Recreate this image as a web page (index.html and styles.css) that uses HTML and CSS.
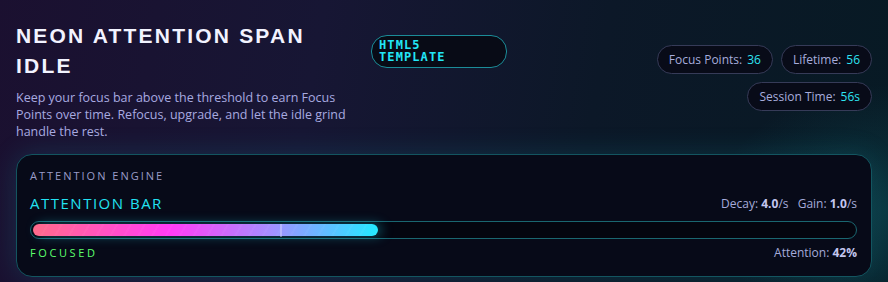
FILE: index.html
```html
<!DOCTYPE html>
<html lang="en">
<head>
<meta charset="utf-8">
<title>Neon Attention Span Idle</title>
<link rel="stylesheet" href="styles.css">
</head>
<body>
<div class="shell">
  <header class="header">
    <div class="intro">
      <h1 class="title">NEON ATTENTION SPAN IDLE</h1>
      <p class="desc">Keep your focus bar above the threshold to earn Focus Points over time. Refocus, upgrade, and let the idle grind handle the rest.</p>
    </div>
    <div class="badge"><span class="badge-text">HTML5 TEMPLATE</span></div>
    <div class="stats">
      <span class="pill">Focus Points: <b>36</b></span>
      <span class="pill">Lifetime: <b>56</b></span>
      <span class="pill">Session Time: <b>56s</b></span>
    </div>
  </header>
  <section class="card">
    <div class="eyebrow">ATTENTION ENGINE</div>
    <div class="row">
      <h2 class="bar-title">ATTENTION BAR</h2>
      <div class="rates">Decay: <b>4.0</b>/s <span class="sp"></span>Gain: <b>1.0</b>/s</div>
    </div>
    <div class="track">
      <div class="fill" style="width:42%"></div>
      <div class="marker" style="left:30%"></div>
    </div>
    <div class="row row-bottom">
      <div class="state">FOCUSED</div>
      <div class="rates">Attention: <b>42%</b></div>
    </div>
  </section>
</div>
</body>
</html>
```
FILE: styles.css
```css
html, body {
  margin: 0;
  padding: 0;
  background: #0b1322;
  overflow: hidden;
  height: 282px;
}
body {
  font-family: "Open Sans", "DejaVu Sans", sans-serif;
  color: #a9aee0;
}
.shell {
  margin: -12px -8px 0 -6px;
  padding: 32px 23px 7px 21px;
  border: 1px solid #13555e;
  border-bottom: 0;
  border-radius: 26px 26px 0 0;
  background:
    radial-gradient(ellipse 260px 180px at 100% 75%, rgba(20, 110, 120, 0.35), transparent 70%),
    linear-gradient(100deg, #1b1030 0%, #171634 35%, #0c1828 65%, #071a24 100%);
}
.header {
  display: flex;
  align-items: flex-start;
}
.intro {
  width: 345px;
}
.title {
  margin: 0;
  font-family: "Liberation Sans", Arial, sans-serif;
  font-weight: bold;
  font-size: 21px;
  line-height: 30px;
  letter-spacing: 2.2px;
  color: #f2f3ff;
}
.desc {
  margin: 8px 0 0;
  font-size: 12.5px;
  line-height: 17px;
  color: #a8aae0;
}
.badge {
  box-sizing: border-box;
  width: 136px;
  margin: 14px 0 0 10px;
  padding: 3px 7px 4px;
  border: 1px solid #1b8c98;
  border-radius: 16px;
  background: #080b16;
}
.badge-text {
  display: block;
  width: 80px;
  font-family: "DejaVu Sans Mono", monospace;
  font-weight: bold;
  font-size: 12px;
  line-height: 12px;
  letter-spacing: 1.1px;
  color: #22e6f6;
}
.stats {
  flex: 1;
  display: flex;
  flex-wrap: wrap;
  justify-content: flex-end;
  gap: 8px;
  margin: 24px 0 0 120px;
}
.pill {
  display: inline-flex;
  align-items: center;
  height: 27px;
  padding: 0 11px;
  border: 1px solid #363b58;
  border-radius: 15px;
  background: #080b18;
  font-size: 12px;
  color: #a7acdc;
  white-space: nowrap;
}
.pill b {
  font-weight: normal;
  color: #2ee4f2;
  margin-left: 5px;
}
.card {
  margin-top: 14px;
  padding: 14px 14px 15px 13px;
  border: 1px solid #135560;
  border-radius: 16px;
  background: #070a18;
  box-shadow: 0 0 28px rgba(24, 170, 190, 0.18);
}
.eyebrow {
  font-size: 11px;
  line-height: 14px;
  letter-spacing: 2px;
  color: #9a9cc8;
}
.row {
  display: flex;
  justify-content: space-between;
  align-items: flex-end;
  margin-top: 11px;
}
.bar-title {
  margin: 0;
  font-weight: normal;
  font-size: 15px;
  line-height: 18px;
  letter-spacing: 1.5px;
  color: #22e2f2;
}
.rates {
  font-size: 12px;
  line-height: 16px;
  color: #a5aada;
}
.rates b {
  color: #c3c6ef;
}
.sp {
  display: inline-block;
  width: 6px;
}
.track {
  position: relative;
  margin-top: 9px;
  height: 12px;
  padding: 2px;
  border: 1px solid #1a6670;
  border-radius: 9px;
  background: #04050f;
}
.fill {
  height: 12px;
  border-radius: 6px;
  background:
    repeating-linear-gradient(120deg, rgba(255, 255, 255, 0.035) 0 2px, transparent 2px 12px),
    linear-gradient(90deg, #ff6b8a 0%, #ff3cf6 40%, #a88cff 68%, #22eaff 100%);
  box-shadow: 4px 0 12px rgba(34, 234, 255, 0.35);
}
.marker {
  position: absolute;
  top: 2px;
  width: 2px;
  height: 13px;
  margin-left: 1px;
  background: rgba(220, 220, 255, 0.45);
}
.row-bottom {
  margin-top: 6px;
  align-items: center;
}
.state {
  font-size: 11px;
  line-height: 16px;
  letter-spacing: 2.6px;
  color: #5cff6c;
}
```
